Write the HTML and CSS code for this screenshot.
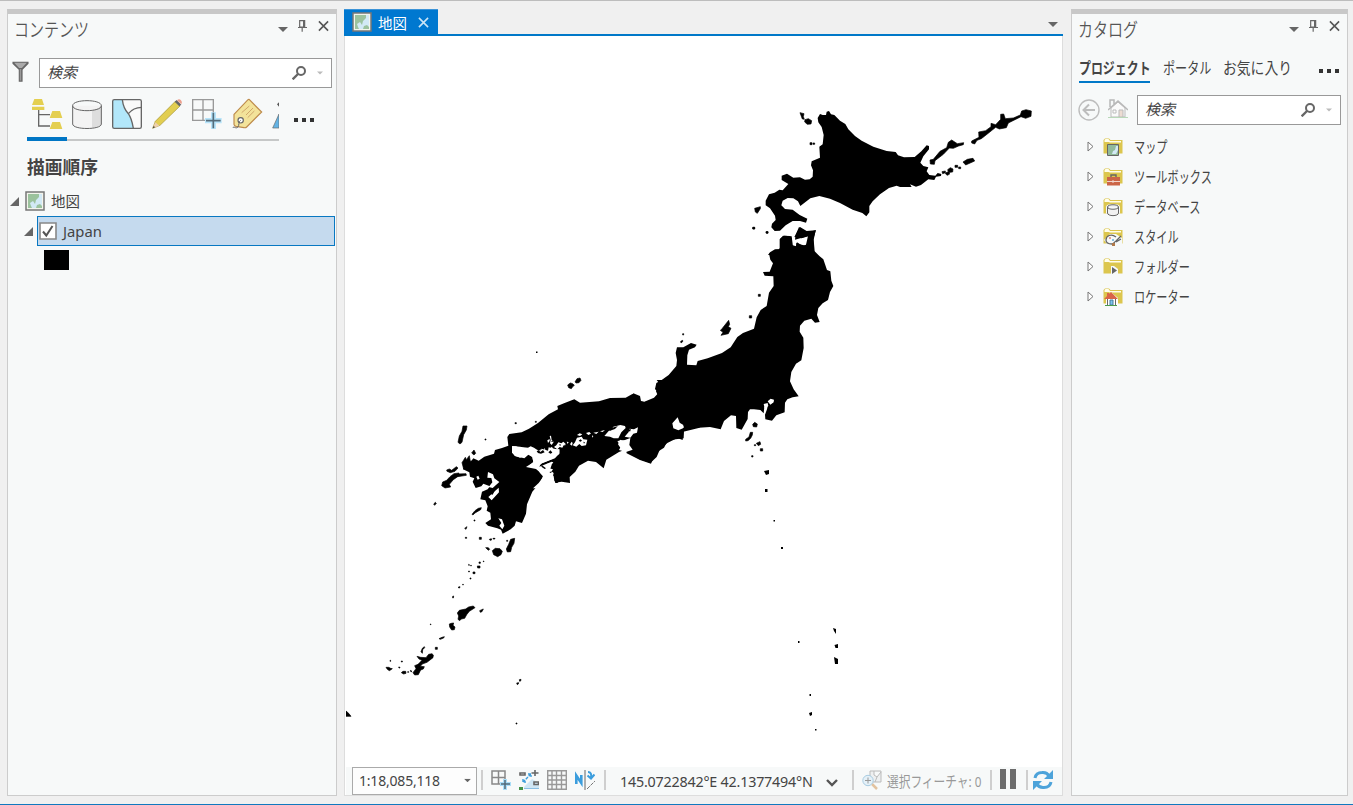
FILE: index.html
```html
<!DOCTYPE html>
<html lang="ja">
<head>
<meta charset="utf-8">
<title>地図</title>
<link rel="stylesheet" href="styles.css">
</head>
<body>
<svg class="defs" width="0" height="0">
  <defs>
    <symbol id="caret" viewBox="0 0 10 5"><path d="M0 0h10L5 5z" fill="#666"/></symbol>
    <symbol id="pin" viewBox="0 0 27 36"><path d="M5 2H20V21H5zM0 22.500H27M12.500 23V35" fill="none" stroke="#666" stroke-width="3.500"/><path d="M15 3h6v18h-6z" fill="#666"/></symbol>
    <symbol id="close" viewBox="0 0 12 12"><path d="M1 1l10 10M11 1L1 11" fill="none" stroke="currentColor" stroke-width="1.700"/></symbol>
    <symbol id="lens" viewBox="0 0 42 42"><circle cx="27" cy="15" r="12" fill="none" stroke="#666" stroke-width="6"/><path d="M18 24L2 40" stroke="#666" stroke-width="7"/></symbol>
    <symbol id="mapicon" viewBox="0 0 20 20"><path d="M1 1h18v18H1z" fill="#f3f4ec" stroke="#777" stroke-width="1.500"/><path d="M3 3h14v14H3z" fill="#d2e9f5"/><path d="M3 3h11v3l-3 3-1 4-2-3-3 2 1 3 1 2H3zM11 17l1-3 3-1 2 2v2z" fill="#9bc29d"/></symbol>
    <symbol id="open" viewBox="0 0 9 9"><path d="M9 0v9H0z" fill="#666"/></symbol>
    <symbol id="closed" viewBox="0 0 7 11"><path d="M1 1v9l5-4.500z" fill="#fff" stroke="#777"/></symbol>
    <symbol id="folder" viewBox="0 0 20 20"><path d="M.500 16.500V3L2 1.500h4L7.500 3h12v13.500z" fill="#dcc64e"/><path d="M1.500 5V3l1-1h3l1.500 2h11v1.500H7L5.500 5z" fill="#fffdec"/></symbol>
  </defs>
</svg>
<div class="app">
  <section class="panel contents">
    <header class="head"><h2 class="title">コンテンツ</h2>
      <svg class="i-caret"><use href="#caret"/></svg><svg class="i-pin"><use href="#pin"/></svg><svg class="i-close"><use href="#close"/></svg>
    </header>
    <div class="searchrow">
      <svg class="funnel" viewBox="0 0 48 60"><path d="M1 2H47V8L30 25V59H19V25L1 8z" fill="#666"/><path d="M6 5H42L28 20H20z" fill="#aaa"/><path d="M22 23h4v33h-4z" fill="#999"/></svg>
      <div class="search"><i>検索</i><svg class="i-lens"><use href="#lens"/></svg><svg class="i-small" viewBox="0 0 10 5"><path d="M0 0h10L5 5z" fill="#bbb"/></svg></div>
    </div>
    <div class="tools">
      <div class="tabs">
        <div class="tab on"><svg viewBox="93 294 96 96"><path d="M116 330V378H150M116 344H150" fill="none" stroke="#666" stroke-width="4"/><path d="M103 297H126L132 315H96zM96 320H133V330H96zM157 333H180L187 354H149zM157 366H180L187 387H149z" fill="#e4cf50"/></svg></div>
        <div class="tab"><svg viewBox="213 294 96 96"><path d="M218 317v55c0 18 86 18 86 0v-55" fill="#f3f3f3"/><path d="M276 330l28-8v50q-5 8-28 12z" fill="#ddd"/><path d="M218 317v55c0 18 86 18 86 0v-55c0 20-86 20-86 0c0-20 86-20 86 0" fill="none" stroke="#666" stroke-width="3"/></svg></div>
        <div class="tab"><svg viewBox="333 294 96 96"><rect x="338" y="299" width="86" height="86" rx="5" fill="#fafafa"/><path d="M342 299h25c2 18 5 29 18 42c10 14 12 28 15 44h-58q-4 0-4-4v-78q0-4 4-4" fill="#b2e7fa"/><path d="M367 299c2 18 5 29 18 42c10 14 12 28 15 44M385 341q15-19 40-19" fill="none" stroke="#666" stroke-width="4"/><rect x="338" y="299" width="86" height="86" rx="5" fill="none" stroke="#666" stroke-width="4"/></svg></div>
        <div class="tab"><svg viewBox="453 294 96 96"><path d="M458 385l8-21L526 304l14 14-60 58z" fill="#e2ce50" stroke="#a49434" stroke-width="2"/><path d="M458 385l8-18 12 10z" fill="#edcfad"/><path d="M458 385l3-7 4 4z" fill="#333"/><path d="M524 305l6-5 14 14-6 5z" fill="#666"/><path d="M531 301q6-6 12 0t1 12z" fill="#eda08e"/></svg></div>
        <div class="tab"><svg viewBox="573 294 96 96"><path d="M578 299h62v62h-62zM609 299v62M578 330h62" fill="none" stroke="#999" stroke-width="4"/><path d="M633 337h15v17h17v16h-17v17h-15v-17h-18v-16h18z" fill="#b7e4fa"/><path d="M640 338v47M618 362h44" stroke="#546c7a" stroke-width="5"/></svg></div>
        <div class="tab"><svg viewBox="693 294 96 96"><path d="M702 343L744 299q3-2 5 1l36 36-45 45q-3 3-8 2l-24-4q-5-1-6-6z" fill="#f3e39a" stroke="#bd8b4c" stroke-width="3.500"/><path d="M725 338l23-20M738 345l21-21M743 353l20-20" stroke="#d1a86c" stroke-width="3"/><circle cx="722" cy="361" r="8" fill="#fff" stroke="#666" stroke-width="3.500"/><path d="M722 361c-8 3-3 16-9 21s-13-5-14 2" fill="none" stroke="#666" stroke-width="3"/></svg></div>
        <div class="tab clip"><svg viewBox="813 294 96 96"><path d="M818 384l19-42v42z" fill="#63b3e4" stroke="#666" stroke-width="2"/><path d="M831 313l6-6v13z" fill="#555"/></svg></div>
      </div>
      <div class="dots"><b></b><b></b><b></b></div>
    </div>
    <h3 class="order">描画順序</h3>
    <div class="row maprow"><svg class="i-open"><use href="#open"/></svg><svg class="i-map"><use href="#mapicon"/></svg><span>地図</span></div>
    <div class="row layer"><svg class="i-open"><use href="#open"/></svg><div class="sel"><svg class="check" viewBox="0 0 18 18"><path d="M1 1h16v16H1z" fill="#fff" stroke="#888" stroke-width="1.600"/><path d="M4 9.500l3.300 4L13.500 4" fill="none" stroke="#555" stroke-width="2"/></svg><span>Japan</span></div></div>
    <div class="swatch"></div>
  </section>

  <main class="view">
    <div class="viewtabs"><div class="viewtab"><svg class="i-map"><use href="#mapicon"/></svg><span>地図</span><svg class="i-close"><use href="#close"/></svg></div><svg class="i-caret"><use href="#caret"/></svg></div>
    <div class="mapbox">
      <svg class="map" viewBox="346 36 716 731">
        <g transform="translate(740 95) scale(.33333)">
          <path d="M233 69L240 57L248 60L258 60L260 50L267 48L273 58L283 60L300 77L316 87L325 103L345 123L365 137L400 155L440 168L467 171L474 181L492 187L524 186L544 169L560 151L567 153V163L550 184L541 203L550 213L565 217L560 229L568 240L586 242L593 234L604 237L603 243L588 245L583 255L565 253L543 270L528 275L510 268L515 276H480L470 272L447 279L420 298L398 319L388 333V352L379 364L367 354L338 344L300 324L270 311L238 303L211 310L181 333L174 319L160 310L143 309L128 317L124 331L135 342L158 344L179 360L202 371L198 383L180 378L158 378L137 391L120 407L104 408L94 397L96 386L107 375L105 362L90 340L77 331V317L87 298L104 293L118 284L128 286L145 267L125 255L125 242L141 236L160 248L180 247L195 254L209 253L218 245L219 226L213 211L215 199L240 188L238 155L248 148L251 120L245 96L235 82z"/>
          <path class="isle" d="M570 195L580 193L600 169L620 158L625 142L635 135L652 146L671 143L670 149L656 153L640 160L628 159L610 178L585 197L583 208L571 207zM695 138L717 127L716 111L737 107L753 95V85L767 89L782 73V58L791 57L796 71L820 69L841 60L845 48L858 44L874 48L873 64L857 70L843 65L805 84L799 98L778 102L767 97L742 117L724 131L711 136L704 147L695 144zM669 201L682 193L699 190L704 198L677 210zM180 53L192 56L190 65L193 73L187 72zM195 74L205 71L215 77L213 87L202 88L194 81zM44 340L61 335V341L52 355L46 351zM210 143h6v6h-6zM219 144h5v4h-5zM38 397h6v5h-6zM78 410h6v4h-6zM606 230l10-2v5l-8 3zM616 234l9-4-2-6 8-6 8 4-1 9-9 1-1 6-7 3-5-6zM645 211h8v6h-8zM656 216h6v5h-6z"/>
          <path d="M84 480L90 472L105 463H117L126 450L120 432L133 422L155 424L159 455L169 454L171 442L187 453L198 449L204 423L191 427L165 434L167 419L177 396L203 413L228 405L220 432L222 467L228 480z"/>
        </g>
        <g transform="translate(640 220) scale(.33333)">
          <path d="M419 58L429 47L449 48L456 56V75L468 79L469 68L485 74L498 77L504 65L505 49L485 55L463 51L480 21L500 33L527 31L521 59L524 94L539 109L550 118L561 150L571 154L574 182L580 198L570 216L564 240L548 250L535 264L531 285L539 306L525 308L514 296L493 302L480 317L479 335L490 353L491 384L484 421L468 431L454 456L450 484L461 508L476 529L458 532L442 538L435 548L434 577L409 586L396 602L376 598L375 584L381 568L384 554L373 560L371 580L361 570L342 568L330 568L324 576L323 597L305 629L289 624L288 588L273 586L252 603L242 628L210 621L165 624L132 632L131 655L84 661L72 683L46 700L33 731L0 720L-40 700L-50 650L-60 570L-20 520L0 528L3 543L13 545L42 533L55 519L45 507L49 489L65 480L86 465L109 438L111 420L107 399L111 382L130 382L153 369L170 374L165 382L147 389L142 406L141 434L169 436L173 423L203 415L246 399L272 382L292 351L309 339L342 326L350 292L362 270L380 258L387 218L401 198L400 169L374 167L369 156L389 155L399 130L391 119L387 101L408 89L419 88z"/>
          <path class="isle" d="M243 330L266 301L269 313L265 320L273 325L265 341L243 346L249 337L241 331zM344 607l8 5-2 9-10-1-2-7zM331 637h7l-1 8-5 10-8 7-7 1v-5l10-7zM349 670l11-5 2 8-7 4zM361 686h7v7h-7zM343 674h4v3h-4zM335 707h4v4h-4zM328 287h7v7h-7zM355 223h6v6h-6zM128 341h3v4h-3zM122 364l6-3v4l-5 4zM339 22h5v5h-5zM379 35h5v5h-5z"/>
          <path d="M113 590L100 603L99 616L119 630L138 629L132 622L163 613L138 611L126 614L119 593zM383 544l9-8 10 3-1 8-10 7zM371 552l12-3 2 9-11 7z" fill="#fff"/><path d="M130 618l28-1-9 7-16 3z"/>
        </g>
        <g transform="translate(420 380) scale(.33333)">
          <path d="M710 0L719 12L708 34L714 48L705 56L673 67L650 62L651 48L637 42L617 53L570 54L537 64L480 68L463 58L432 70L412 78L414 88L386 103L354 129L327 146L305 157L268 162L262 171L265 197L246 204L225 210L222 221L193 230L176 242L160 235L151 247L137 245L129 268L148 277L150 290L163 295L158 305L167 324L184 319L190 311L210 319L203 328L186 335L181 358L196 361L203 379L200 392L211 398L213 418L196 429L204 437L232 445L243 449L248 461L272 448L284 437L288 424L306 429L318 401L321 373L337 335L361 307L370 286L348 267L318 261L340 247L337 231L325 224L313 235L286 229L276 218V198L300 200L330 205L360 216L365 206L384 212L386 202L406 207L418 208V220L405 235L362 251L358 260L395 245L400 247L387 265L399 268L393 277L401 289L404 308L425 305L450 309L449 291L466 275L477 257L504 242L528 246L551 265L559 239L597 216L607 212L594 193L600 179L620 185L631 184L628 200L635 214L655 236L691 249L710 231L720 208L742 189L772 174L788 180L790 155L839 143V0z"/>
          <path d="M757 130L773 112L779 128L795 138L789 145L775 151L760 145zM204 276L219 283L223 295L238 306L218 324L206 321L217 307L214 294L202 293zM205 351L236 323L237 337L215 361zM235 415L246 418L253 437L247 448L238 437L244 429zM169 290l6-3 4 9-6 3z" fill="#fff"/>
          <path d="M789 136l28-4-9 10-15 1zM210 341l14-9-6 12z"/>
          <path class="isle" d="M155 219l7-9 5 10-5 5zM65 317l3-11 12-5 10-11 12-9 15-2-4 11-13 9-12 14 4 8-17 3zM80 270l8-3 7 4 14-11 5 4-9 10-14 4-10-4zM112 282l26-1 1 5-26 4zM126 248l10-16 3 7 9-12 3 17 18-3-8 26-23-4-7 4zM114 187l4-19 8-14 3-16 12 0-2 12-8 14-5 23-6 5zM156 403l9-11 10-7 9-2-2 6-17 10-6 6zM41 372l5-5 3 3-5 6zM443 15l8-6 7 2 5 5-5 4-4 6-8-3zM465 6l6-10 9-2 3 7-6 7-8 1zM217 512l9-7 14 1 7 8-4 10-10 6-12-6zM259 507l7-14 6-15 12-3-2 15-7 12-3 13-10 1zM134 445l7-5-3 8zM136 472h4v3h-4zM178 472h6v6h-6zM208 478l6-2 1 4-5 1zM219 475h6v2h-6zM197 503h8l4 5-4 3zM195 177h3v3h-3zM285 128h4v3h-4zM346 124h3v3h-3zM260 481h3v3h-3zM162 420h3v3h-3z"/>
        </g>
        <g transform="translate(500 415) scale(.33333)">
          <path fill="#fff" d="M38 94L48 94L60 99L84 98L92 94L102 98L111 104L122 107L132 117L143 111L154 114L163 106L178 103V117L158 131L126 145L112 157L84 155L100 141L97 126L86 118L60 128L42 121zM112 160L128 157L142 146L155 149L150 165L161 174L157 190L168 205L145 220H99L116 204L130 185L120 174zM218 91L225 82L231 68L245 65L250 73L262 74L258 91L245 93L238 87L229 95zM313 63L326 48L334 45L340 35L361 30L375 33L377 39L364 52L355 70L341 70L330 65zM374 65L386 51L389 41L402 43L414 37L411 53L400 56L391 68zM352 78L375 75L391 69L388 90L398 104L378 111L357 105L363 94z"/>
          <path fill="#fff" d="M142 76l7-4v6l-5 6zM149 63l4-1 2 13 6 6-6 9-5-5 2-10zM162 96l7-5 6-9 9 3 6-5 8 8-7 3-4 7-8-2-7 7zM188 87h8v4h-8zM200 80l6 1-3 6zM210 88l5-8 3 4-2 8zM231 60l8-5 8 3-7 5zM258 54l10-3 5 5-8 4zM276 61l4 3-3 4zM280 53l16-3-7 7zM300 49l15-4-7 6zM120 103l4 3-2 4zM132 99l4 4-2 5zM151 99l5-4 3 7-6 4z"/>
          <path d="M328 42l9-4 17-5-9 9-15 5zM384 45l9-3-3 8zM236 77l6-4 4 4-5 3zM250 80l5 2-3 4zM176 90l5-3 2 5zM153 81l4-4 2 4zM110 109l6-4 5 6 8-6 5 7-11 4-9-2zM145 112l7-6 5 7-6 3zM126 151l12 9-4 2-10-7zM148 171l11-2-7 5zM163 192l12 12h-9z"/>
        </g>
        <g transform="translate(340 530) scale(.33333)">
          <path class="isle" d="M352 249l6-8 19-4 9-6 14-3 5 5-17 11-8 10-6 11-10 2-5 5-5-4 2-10zM419 242l6-3 5-2-4 8-5 2zM328 282l6-2 7-1-2 7 6 5-2 8-8 1-6-9zM297 326l9-4 7-2-2 4-10 4zM286 352h6v6h-6zM247 355l6-5 1 3-6 6-1 11-4-5zM231 379l11 3 16 1 8-10 10-2 4 4-1 8-18 14-14 5-6 7 12 1-3 7-8 3-7 14-11 1-5-7 9-12-4-9 10-4 6-6 6-6-9-4zM138 412h8l6 3 5 1-4 3-5 3-6-4zM184 428l5-4 8 0 1 6-7 2zM203 425h3v2h-3zM211 421l5 3-3 2zM176 411h3l1 3h-3zM184 393h3v3h-3zM150 391h2v3h-2zM18 543l8 7 7 9H18zM530 459l6-1-1 4-3 2zM538 449l5-1-1 5-3 1zM528 579h3v3h-3zM271 282h2v2h-2zM338 199l3-1-1 6h-2zM355 171l5-1-1 4h-3zM368 163h2v2h-2zM390 144h3v3h-3zM399 126h6v5h-6zM412 108h8v6h-7zM417 96h4v4h-4zM430 93h2v2h-2zM386 123h2v3h-2zM386 103l2 1v2h-2zM392 106h2v2h-2z"/>
        </g>
        <path d="M536 351.500h1.500v1.500h-1.500zM764 471l5-1v4l-3 1zM765 489h2.500v3h-2.500zM773.500 520h1.500v1.500h-1.500zM781 547h2v2h-2zM798 641h1.500v2h-1.500zM833 628l3 1v5l-2-3zM834.500 645l3.500-1v4h-2.500zM834 657l4 2v5h-3zM809.500 694h1.500v2h-1.500zM809 713l3-1v3l-2 1zM815 729h1.500v1.500h-1.500z"/>
      </svg>
      <footer class="status">
        <div class="scale"><span>1:18,085,118</span><svg viewBox="0 0 10 5"><use href="#caret"/></svg></div>
        <hr class="s1">
        <svg class="g1" viewBox="0 0 20 20"><path d="M1 1h13v13H1zM7.500 1v13M1 7.500h13" fill="none" stroke="#888" stroke-width="1.500"/><path d="M12 9h4v3h4v4h-4v4h-4v-4H9v-4h3z" fill="#a9ddf8"/><path d="M14 10v9M10 14h9" stroke="#526a78" stroke-width="1.500"/></svg>
        <svg class="g2" viewBox="0 0 20 20"><path d="M5 17L13 9l7 4v5H5z" fill="#cfe6f5"/><path d="M0 17h4v3H0z" fill="#459247"/><path d="M5 18.500h15" stroke="#8abfe5"/><path d="M1 3h5v2H1zM12.500 3h7M16 0v6M15 12h4.500v2.500H15z" fill="none" stroke="#666" stroke-width="1.600"/><path d="M4 12l8-8M4 9v3h3M9 4h3v3" fill="none" stroke="#3b9ddd" stroke-width="1.400" stroke-dasharray="3 1"/></svg>
        <svg class="g3" viewBox="0 0 20 20"><path d="M.700.700h18.600v18.600H.700zM5 1v18M9.500 1v18M14.500 1v18M1 5.500h18M1 10h18M1 14.500h18" fill="none" stroke="#999" stroke-width="1.400"/></svg>
        <svg class="g4" viewBox="0 0 20 20"><path d="M1.300 14V5.500l5 7.500V5" fill="none" stroke="#3b9ddd" stroke-width="2.600"/><path d="M10 0v20" stroke="#666"/><path d="M12 19l8-8" stroke="#777" stroke-dasharray="4 1"/><path d="M13 2q4 0 3 6M12.500 5.500l3.500 3 3.500-4" fill="none" stroke="#3b9ddd" stroke-width="2"/></svg>
        <hr class="s2">
        <span class="coords">145.0722842°E 42.1377494°N</span>
        <svg class="chev" viewBox="0 0 12 8"><path d="M1 1l5 5 5-5" fill="none" stroke="#555" stroke-width="2.400"/></svg>
        <hr class="s3">
        <svg class="pick" viewBox="0 0 20 20"><path d="M8 1h11v11H8zM12 1v4l3 2 4-5M15 7l-2 5" fill="#eef0f1" stroke="#bbb"/><path d="M10 14l5 5" stroke="#e2c3a0" stroke-width="2.500"/><circle cx="6" cy="10.500" r="5.200" fill="#e5f1f8" stroke="#a9cce2"/><path d="M6 7.500v6M3 10.500h6" stroke="#999"/></svg>
        <span class="picked">選択フィーチャ: 0</span>
        <hr class="s4"><div class="pause"></div><hr class="s5">
        <svg class="refresh" viewBox="0 0 20 20"><path d="M2 8Q3 2.500 9 2.500Q14 2 16 6M18 12Q17 17.500 11 17.500Q6 18 4 14" fill="none" stroke="#4da3da" stroke-width="3"/><path d="M20 0v9h-9zM0 20v-9h9z" fill="#4da3da"/></svg>
      </footer>
    </div>
  </main>

  <section class="panel catalog">
    <header class="head"><h2 class="title">カタログ</h2><svg class="i-caret"><use href="#caret"/></svg><svg class="i-pin"><use href="#pin"/></svg><svg class="i-close"><use href="#close"/></svg></header>
    <nav class="cattabs"><div class="ct project"><span>プロジェクト</span></div><div class="ct portal"><span>ポータル</span></div><div class="ct fav"><span>お気に入り</span></div><div class="dots"><b></b><b></b><b></b></div></nav>
    <div class="searchrow">
      <svg class="back" viewBox="0 0 22 22"><circle cx="11" cy="11" r="10" fill="none" stroke="#bdbdbd" stroke-width="1.400"/><path d="M17 11H6M11 5.500L5.500 11l5.500 5.500" fill="none" stroke="#bdbdbd" stroke-width="2"/></svg>
      <svg class="home" viewBox="0 0 20 20"><path d="M3 9v9h14V9l-7-6z" fill="#fafafa" stroke="#bbb"/><path d="M0 11L10 2l10 9M2 8V1h4v5" fill="none" stroke="#b8b8b8" stroke-width="1.500"/><path d="M11 11h4v7h-4z" fill="#eddcd2" stroke="#bbb"/><path d="M5 11h3v3H5z" fill="#fff" stroke="#bbb"/><path d="M0 18.500h20" stroke="#b8d8b8"/></svg>
      <div class="search"><i>検索</i><svg class="i-lens"><use href="#lens"/></svg><svg class="i-small" viewBox="0 0 10 5"><path d="M0 0h10L5 5z" fill="#bbb"/></svg></div>
    </div>
    <ul class="tree">
      <li><svg class="i-closed"><use href="#closed"/></svg><svg class="fi" viewBox="0 0 20 20"><use href="#folder"/><path d="M4.500 7.500h11v11h-11z" fill="#91ba9b" stroke="#666"/><path d="M13 9l-1 4-2 1-1 3h4l2-4V9z" fill="#d3eaf6"/></svg><span>マップ</span></li>
      <li><svg class="i-closed"><use href="#closed"/></svg><svg class="fi" viewBox="0 0 20 20"><use href="#folder"/><path d="M8 10V8h5v2" fill="none" stroke="#666" stroke-width="1.400"/><path d="M4 10h13v8.500H4z" fill="#cb6547"/><path d="M4 14.500h13M10 13v3" stroke="#f0d5cb"/></svg><span>ツールボックス</span></li>
      <li><svg class="i-closed"><use href="#closed"/></svg><svg class="fi" viewBox="0 0 20 20"><use href="#folder"/><path d="M3 16.500V10q0-3 7-3t7 3v6.500z" fill="#f6f9f9"/><path d="M4.500 10v6c0 3.500 11 3.500 11 0v-6c0 3-11 3-11 0c0-3 11-3 11 0" fill="#f1f1f1" stroke="#666"/></svg><span>データベース</span></li>
      <li><svg class="i-closed"><use href="#closed"/></svg><svg class="fi" viewBox="0 0 20 20"><use href="#folder"/><path d="M1 13l6-6h6l6 4v6H4z" fill="#f6f9f9"/><path d="M13 10c-5-4-10-1-10 3s4 4 6 4 2-2 4-3l5-5M13 15l5-3" fill="none" stroke="#666" stroke-width="1.300"/><circle cx="7" cy="11" r="1" fill="#dc8a77"/><circle cx="10" cy="13" r="1" fill="#63abd7"/><path d="M9 16h3v3H9z" fill="#b07a4a"/></svg><span>スタイル</span></li>
      <li><svg class="i-closed"><use href="#closed"/></svg><svg class="fi" viewBox="0 0 20 20"><use href="#folder"/><path d="M8 9h3l4 3v5H8z" fill="#f6f9f9"/><path d="M9 10v7l5-3.500z" fill="#666"/></svg><span>フォルダー</span></li>
      <li><svg class="i-closed"><use href="#closed"/></svg><svg class="fi" viewBox="0 0 20 20"><use href="#folder"/><path d="M3 11l6-5 6 5v8H3z" fill="#fff"/><path d="M4.500 11v7.500h8V11" fill="none" stroke="#666"/><path d="M1 12L8 5l7 7zM4 6h2v3H4z" fill="#d96547"/><path d="M7 13h3v5H7z" fill="#7cc5ef" stroke="#487a9a"/><path d="M2 18.500h12" stroke="#4b9b4e"/></svg><span>ロケーター</span></li>
    </ul>
  </section>
</div>
</body>
</html>
```
FILE: styles.css
```css
* { box-sizing: border-box; }
body { margin: 0; font-family: "Noto Sans", "Noto Sans CJK JP", sans-serif; font-size: 15px; color: #444; background: #f0f0f0; }
svg { display: block; flex: none; }
.defs { position: absolute; }
h2, h3, ul, hr { margin: 0; padding: 0; font-weight: 400; }
.app { height: 805px; display: flex; align-items: flex-start; padding: 8px 5px 0 7px; border-top: 1px solid #bdbdbd; border-bottom: 1px solid #1079bf; }
.panel { height: 787px; background: #f7f9f9; border: 1px solid #ccc; border-top: 5px solid #c8c8c8; }
.contents { width: 330px; }
.view { width: 719px; margin-left: 7px; }
.catalog { width: 277px; margin-left: 8px; }
.head { display: flex; height: 33px; padding: 6px 7px 0 6px; }
.title { font-family: "Noto Sans CJK JP", sans-serif; font-weight: 350; color: #555; font-size: 19px; line-height: 22px; margin-top: -2px; width: 100px; margin-right: auto; transform: scaleX(.79); transform-origin: left; white-space: nowrap; }
.i-caret { width: 10px; height: 5px; margin-top: 7px; }
.head .i-caret { margin-right: 10px; }
.head .i-pin { width: 9px; height: 12px; margin-right: 11px; }
.i-close { width: 12px; height: 12px; color: #555; }
.head .i-close { width: 11px; height: 12px; }
.searchrow { display: flex; }
.contents .searchrow { padding: 11px 4px 0 4px; }
.funnel { width: 17px; height: 21px; margin: 3px 10px 0 0; }
.search { flex: 1; height: 30px; background: #fff; border: 1px solid #999; display: flex; align-items: center; padding: 0 8px 0 7px; font-family: "Noto Sans CJK JP", sans-serif; }
.search i { margin-right: auto; line-height: 26px; height: 28px; }
.i-lens { width: 14px; height: 14px; margin-right: 11px; }
.i-small { width: 6px; height: 4px; }
.tools { display: flex; padding: 5px 0 0 19px; }
.tabs { width: 252px; height: 48px; display: flex; overflow: hidden; background: linear-gradient(#c6c8c8, #c6c8c8) 0 46px / 100% 2px no-repeat; }
.tab { width: 40px; height: 48px; flex: none; padding: 5px 4px; }
.tab svg { width: 32px; height: 32px; }
.on { border-bottom: 4px solid #0076c5; }
.dots { display: flex; gap: 3px; }
.dots b { width: 4px; height: 4px; background: #333; }
.dots { gap: 4px; }
.tools .dots { margin: 25px 0 0 15px; }
.order { font-weight: 700; font-size: 17.800px; line-height: 26px; padding: 12px 0 1px 19px; font-family: "Noto Sans CJK JP", sans-serif; }
.row { display: flex; align-items: center; }
.i-open { width: 9px; height: 9px; }
.i-map { width: 20px; height: 20px; }
.maprow { height: 30px; margin-top: 6px; padding-left: 2px; }
.maprow .i-map { margin: 0 6px; }
.maprow span { margin-top: -2px; font-size: 14.500px; }
.layer { height: 30px; padding: 0 1px 0 16px; }
.sel { margin-left: 4px; flex: 1; height: 30px; display: flex; align-items: center; border: 1px solid #0878c2; background: #c5daee; }
.sel span { font-size: 14.800px; }
.check { width: 18px; height: 18px; margin: 0 6px 0 1px; }
.swatch { width: 25px; height: 20px; background: #000; margin: 4px 0 0 36px; }
.viewtabs { height: 27px; display: flex; justify-content: space-between; border-bottom: 2px solid #0078c8; padding-right: 5px; }
.viewtab { width: 94px; height: 25px; background: #0078d0; color: #fff; display: flex; align-items: center; padding-left: 8px; border-top: 1px solid #3c94d8; }
.viewtab .i-close { color: #cce5f6; margin-left: 11px; width: 11px; height: 11px; }
.viewtab span { margin-left: 6px; font-size: 14.500px; }
.viewtabs > .i-caret { margin-top: 13px; }
.mapbox { height: 760px; border: 1px solid #ddd; border-top: 0; background: #fff; padding-left: 1px; }
.map { width: 716px; height: 731px; }
.isle { stroke: #000; stroke-width: 2; stroke-linejoin: round; }
.status { height: 28px; background: #f7f9f9; display: flex; align-items: center; padding-left: 6px; }
.scale { width: 125px; height: 28px; border: 1px solid #aaa; background: #fdfdfd; display: flex; align-items: center; justify-content: space-between; padding: 0 5px 2px 6px; font-size: 14px; letter-spacing: -.2px; }
.scale svg { width: 7px; height: 5px; }
.status hr { width: 2px; height: 20px; border: 0; background: #cfcfcf; margin-top: -3px; }
.status .s1 { margin-left: 4px; }
.status > svg { width: 20px; height: 20px; margin-top: -2px; }
.g1, .g2, .g3, .g4 { margin-left: 8px; }
.status .s2 { margin-left: 9px; }
.coords { width: 193px; margin-left: 14px; margin-top: 1px; white-space: nowrap; font-size: 14.300px; letter-spacing: -.2px; }
.status .chev { width: 12px; height: 8px; margin: 4px 0 0 13px; }
.status .s3 { margin-left: 14px; }
.status .pick { margin-left: 8px; }
.picked { width: 125px; margin-left: 5px; margin-top: -1px; white-space: nowrap; color: #999; transform: scaleX(.78); transform-origin: left; }
.status .s4 { margin-left: -22px; }
.pause { width: 16px; height: 20px; margin: -4px 10px 0 8px; border: solid #6c6c6c; border-width: 0 6px; }
.status .refresh { margin-left: 5px; }
.catalog .title { width: 85px; }
.catalog .head { height: 36px; }
.cattabs { display: flex; height: 32px; padding-left: 7px; font-family: "Noto Sans CJK JP", sans-serif; font-size: 15.500px; white-space: nowrap; }
.ct span { display: block; transform-origin: left; line-height: 34px; height: 31px; }
.ct { height: 33px; width: 71px; }
.project { border-bottom: 2px solid #0078c8; font-weight: 700; }
.project span { transform: scaleX(.77); }
.portal { margin-left: 13px; width: 48px; }
.portal span { transform: scaleX(.78); }
.fav { margin-left: 12px; }
.fav span { transform: scaleX(.89); }
.cattabs .dots { margin: 19px 0 0 25px; }
.catalog .searchrow { padding: 13px 6px 0 6px; }
.back { width: 22px; height: 22px; margin-top: 4px; }
.home { width: 20px; height: 20px; margin: 4px 9px 0 8px; }
.tree { list-style: none; padding: 7px 0 0 15px; }
.tree li { height: 30px; display: flex; align-items: center; font-family: "Noto Sans CJK JP", sans-serif; font-size: 15.500px; }
.i-closed { width: 7px; height: 11px; margin: -1px 9px 0 0; }
.fi { width: 20px; height: 20px; margin: -1px 11px 0 0; }
.tree span { display: block; margin-top: -3px; transform: scaleX(.72); transform-origin: left; white-space: nowrap; }
```
